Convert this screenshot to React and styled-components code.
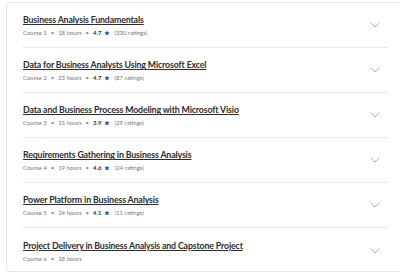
import React from "react";
import styled, { createGlobalStyle } from "styled-components";

const Global = createGlobalStyle`
  html, body { margin: 0; padding: 0; background: #fff; overflow: hidden; }
  body { font-family: "Lato", "Open Sans", sans-serif; }
`;

const Page = styled.div`
  width: 400px;
  height: 273px;
  overflow: hidden;
  padding: 2px 0 0 6px;
  box-sizing: border-box;
`;

const Card = styled.div`
  width: 399px;
  border: 1px solid #e6e6e6;
  border-radius: 3px;
  background: #fff;
  box-sizing: border-box;
`;

const Row = styled.div`
  display: flex;
  align-items: center;
  justify-content: space-between;
  margin: 0 16px;
  height: ${(p) => (p.$last ? "43px" : "45px")};
  padding-top: ${(p) => (p.$last ? "2px" : "0")};
  border-bottom: ${(p) => (p.$last ? "none" : "1px solid #e9e9e9")};
  box-sizing: border-box;
  padding-right: 8px;
`;

const Info = styled.div`
  display: flex;
  flex-direction: column;
  gap: 4px;
  padding-top: 1px;
`;

const Title = styled.a`
  font-size: 8.8px;
  line-height: 11px;
  font-weight: 700;
  color: #2d2d2d;
  text-decoration: underline;
  text-underline-offset: 1px;
  letter-spacing: -0.15px;
`;

const Meta = styled.div`
  display: flex;
  align-items: center;
  font-size: 6px;
  line-height: 8px;
  color: #777;
  gap: 4px;
`;

const Dot = styled.span`
  font-size: 6px;
  color: #888;
`;

const Rating = styled.span`
  font-weight: 700;
  color: #333;
  display: inline-flex;
  align-items: center;
  gap: 3px;
`;

const Chevron = styled.svg`
  width: 10px;
  height: 6px;
  flex-shrink: 0;
`;

const courses = [
  { title: "Business Analysis Fundamentals", n: 1, hours: 18, rating: "4.7", count: "330" },
  { title: "Data for Business Analysts Using Microsoft Excel", n: 2, hours: 23, rating: "4.7", count: "87" },
  { title: "Data and Business Process Modeling with Microsoft Visio", n: 3, hours: 15, rating: "3.9", count: "29" },
  { title: "Requirements Gathering in Business Analysis", n: 4, hours: 19, rating: "4.6", count: "24" },
  { title: "Power Platform in Business Analysis", n: 5, hours: 24, rating: "4.1", count: "11" },
  { title: "Project Delivery in Business Analysis and Capstone Project", n: 6, hours: 18 },
];

const Star = () => (
  <svg width="6" height="6" viewBox="0 0 24 24">
    <path fill="#0056d2" d="M12 1.5l3.1 7 7.4.6-5.6 4.9 1.7 7.4L12 17.5l-6.6 3.9 1.7-7.4L1.5 9.1l7.4-.6z" />
  </svg>
);

export default function App() {
  return (
    <Page>
      <Global />
      <Card>
        {courses.map((c, i) => (
          <Row key={c.n} $last={i === courses.length - 1}>
            <Info>
              <Title>{c.title}</Title>
              <Meta>
                <span>Course {c.n}</span>
                <Dot>•</Dot>
                <span>{c.hours} hours</span>
                {c.rating && (
                  <>
                    <Dot>•</Dot>
                    <Rating>
                      {c.rating} <Star />
                    </Rating>
                    <span>({c.count} ratings)</span>
                  </>
                )}
              </Meta>
            </Info>
            <Chevron viewBox="0 0 10 6">
              <path d="M0.5 0.7 L5 5 L9.5 0.7" fill="none" stroke="#9fb3b6" strokeWidth="1" />
            </Chevron>
          </Row>
        ))}
      </Card>
    </Page>
  );
}
